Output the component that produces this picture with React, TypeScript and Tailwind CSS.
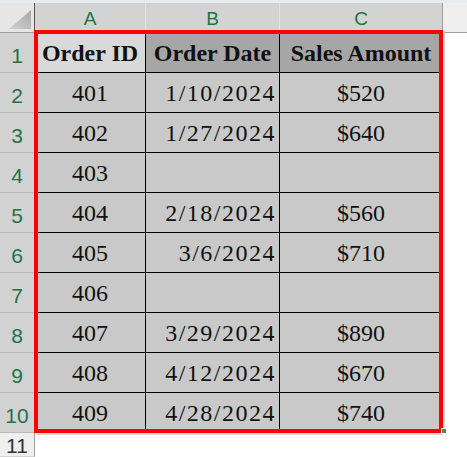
import React from "react";

type Row = { id: string; date: string; amt: string };

const rows: Row[] = [
  { id: "401", date: "1/10/2024", amt: "$520" },
  { id: "402", date: "1/27/2024", amt: "$640" },
  { id: "403", date: "", amt: "" },
  { id: "404", date: "2/18/2024", amt: "$560" },
  { id: "405", date: "3/6/2024", amt: "$710" },
  { id: "406", date: "", amt: "" },
  { id: "407", date: "3/29/2024", amt: "$890" },
  { id: "408", date: "4/12/2024", amt: "$670" },
  { id: "409", date: "4/28/2024", amt: "$740" },
];

const serif = "font-['Liberation_Serif',_'Times_New_Roman',_serif]";
const sans = "font-['Liberation_Sans',_Arial,_sans-serif]";

function RowHead({ n, selected = true }: { n: number; selected?: boolean }) {
  return (
    <div
      className={`w-[35px] shrink-0 flex items-center justify-center border-r border-b ${sans} font-normal text-[21px] ${
        selected
          ? "pt-[6px] text-[#217346] bg-[#d2d2d2] border-b-[#b9b9b9] border-r-[#9e9e9e]"
          : "pt-[2px] text-[#333333] bg-[#efefef] border-b-[#d4d4d4] border-r-[#9e9e9e]"
      }`}
    >
      {n}
    </div>
  );
}

export default function App() {
  return (
    <div className="relative w-[467px] h-[457px] bg-white overflow-hidden">
      {/* top strip */}
      <div className="h-[3px] bg-[#e9eaec]" />
      {/* column header row */}
      <div className={`flex h-[30px] ${sans} text-[19px] text-[#217346]`}>
        <div className="w-[35px] shrink-0 bg-[#e6e6e6] border-r border-r-[#555] border-b border-b-[#9e9e9e] flex items-end justify-end pr-[3px] pb-[3px]">
          <svg width="22" height="19" viewBox="0 0 22 19">
            <defs>
              <linearGradient id="tri" x1="0" y1="1" x2="1" y2="0">
                <stop offset="0" stopColor="#d0d0d0" />
                <stop offset="1" stopColor="#a8a8a8" />
              </linearGradient>
            </defs>
            <polygon points="22,0 22,19 0,19" fill="url(#tri)" />
          </svg>
        </div>
        <div className="w-[111px] shrink-0 bg-[#d3d3d3] border-r border-r-[#e2e2e2] border-b border-b-[#9e9e9e] flex items-center justify-center pt-[4px]">
          A
        </div>
        <div className="w-[134px] shrink-0 bg-[#d3d3d3] border-r border-r-[#e2e2e2] border-b border-b-[#9e9e9e] flex items-center justify-center pt-[4px]">
          B
        </div>
        <div className="w-[163px] shrink-0 bg-[#d3d3d3] border-r border-r-[#9e9e9e] border-b border-b-[#9e9e9e] flex items-center justify-center pt-[4px]">
          C
        </div>
        <div className="flex-1 bg-[#efefef] border-b border-b-[#9e9e9e]" />
      </div>

      {/* row 1 headers */}
      <div className={`flex h-[40px] ${serif} text-[24px] text-[#111]`}>
        <RowHead n={1} />
        <div className="w-[111px] shrink-0 bg-[#d9d9d9] border-r border-b border-black flex items-center justify-center font-bold">
          Order ID
        </div>
        <div className="w-[134px] shrink-0 bg-[#a6a6a6] border-r border-b border-black flex items-center justify-center font-bold">
          Order Date
        </div>
        <div className="w-[163px] shrink-0 bg-[#a6a6a6] border-r border-b border-black flex items-center justify-center font-bold">
          Sales Amount
        </div>
        <div className="flex-1 bg-white" />
      </div>

      {rows.map((r, i) => (
        <div key={r.id} className={`flex h-[40px] ${serif} text-[24px] text-[#111]`}>
          <RowHead n={i + 2} />
          <div className="w-[111px] shrink-0 bg-[#c9c9c9] border-r border-b border-black flex items-center justify-center">
            {r.id}
          </div>
          <div className="w-[134px] shrink-0 bg-[#c9c9c9] border-r border-b border-black flex items-center justify-end pr-[3px] tracking-[1.5px]">
            {r.date}
          </div>
          <div className="w-[163px] shrink-0 bg-[#c9c9c9] border-r border-b border-black flex items-center justify-center">
            {r.amt}
          </div>
          <div className="flex-1 bg-white" />
        </div>
      ))}

      {/* row 11 */}
      <div className="flex h-[24px]">
        <RowHead n={11} selected={false} />
        <div className="flex-1 bg-white" />
      </div>

      {/* selection overlay */}
      <div className="absolute left-[34px] top-[30px] w-[409px] h-[403px] border-4 border-[#ff0000] pointer-events-none" />
      <div className="absolute left-[443px] top-[31px] w-[2px] h-[402px] bg-[#d6d6d6]" />
      <div className="absolute left-[36px] top-[433px] w-[407px] h-[2px] bg-[#d6d6d6]" />
      {/* fill handle */}
      <div className="absolute left-[441px] top-[428px] w-[6px] h-[6px] bg-[#5f7f68] border border-white" />
    </div>
  );
}
